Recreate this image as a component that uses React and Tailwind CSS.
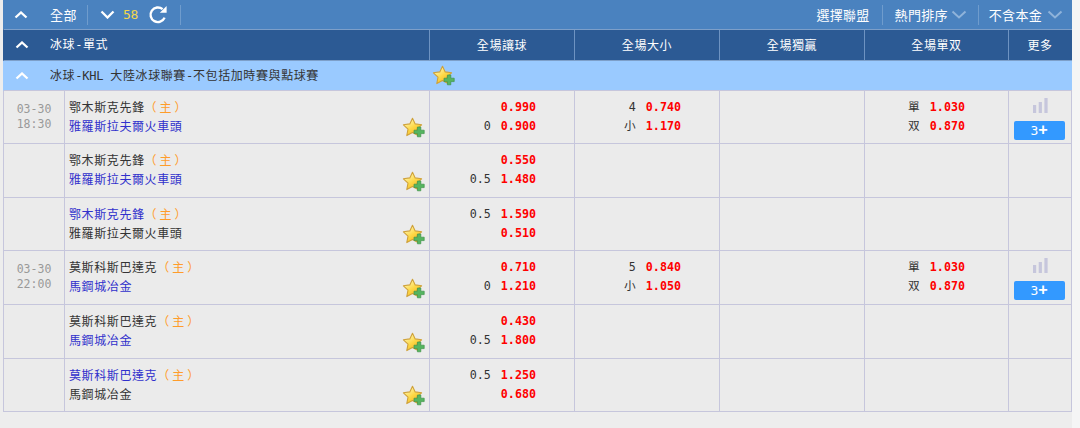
const headers = ['全場讓球', '全場大小', '全場獨贏', '全場單双', '更多']

const matches = [
  { date: '03-30', time: '18:30', home: '鄂木斯克先鋒', away: '雅羅斯拉夫爾火車頭', fav: 'away', hcp: [['', '0.990'], ['0', '0.900']], ou: [['4', '0.740'], ['小', '1.170']], oe: [['單', '1.030'], ['双', '0.870']], h: 'h-[53px]' },
  { home: '鄂木斯克先鋒', away: '雅羅斯拉夫爾火車頭', fav: 'away', hcp: [['', '0.550'], ['0.5', '1.480']], h: 'h-[54px]' },
  { home: '鄂木斯克先鋒', away: '雅羅斯拉夫爾火車頭', fav: 'home', hcp: [['0.5', '1.590'], ['', '0.510']], h: 'h-[53px]' },
  { date: '03-30', time: '22:00', home: '莫斯科斯巴達克', away: '馬鋼城冶金', fav: 'away', hcp: [['', '0.710'], ['0', '1.210']], ou: [['5', '0.840'], ['小', '1.050']], oe: [['單', '1.030'], ['双', '0.870']], h: 'h-[54px]' },
  { home: '莫斯科斯巴達克', away: '馬鋼城冶金', fav: 'away', hcp: [['', '0.430'], ['0.5', '1.800']], h: 'h-[54px]' },
  { home: '莫斯科斯巴達克', away: '馬鋼城冶金', fav: 'home', hcp: [['0.5', '1.250'], ['', '0.680']], h: 'h-[53px]' },
]

const gridCols = 'grid grid-cols-[61px_365px_145px_145px_145px_144px_62px]'
const mono = "font-['DejaVu_Sans_Mono','Noto_Sans_CJK_TC',monospace]"

function Chevron({ up, w = 14, h = 8, stroke = 2.3, className = '' }) {
  const points = up ? `1.5,${h - 1.5} ${w / 2},1.5 ${w - 1.5},${h - 1.5}` : `1.5,1.5 ${w / 2},${h - 1.5} ${w - 1.5},1.5`
  return (
    <svg width={w} height={h} viewBox={`0 0 ${w} ${h}`} className={`block shrink-0 ${className}`}>
      <polyline points={points} fill="none" stroke="currentColor" strokeWidth={stroke} />
    </svg>
  )
}

function Refresh() {
  return (
    <svg width="20" height="20" viewBox="0 0 20 20" className="block shrink-0">
      <path d="M16.6 12.6 A7.3 7.3 0 1 1 14.6 4.2" fill="none" stroke="white" strokeWidth="2.4" />
      <path d="M11.8 7.8 L18.6 7.8 L18.6 1 Z" fill="white" />
    </svg>
  )
}

function FavStar() {
  return (
    <svg width="23" height="21" viewBox="0 0 23 21" className="block">
      <defs>
        <linearGradient id="starFill" x1="0.15" y1="0.1" x2="0.8" y2="1">
          <stop offset="0" stopColor="#fff8b8" />
          <stop offset="0.5" stopColor="#fdd846" />
          <stop offset="1" stopColor="#f3ad1e" />
        </linearGradient>
      </defs>
      <path d="M10.5 1.2 L13.2 6.9 L19.6 7.8 L15 12.2 L16.2 18.6 L10.5 15.5 L4.8 18.6 L6 12.2 L1.4 7.8 L7.8 6.9 Z" fill="url(#starFill)" stroke="#cfa23a" strokeWidth="1.1" strokeLinejoin="round" />
      <path d="M15.4 10 h3.4 v3.2 h3.4 v3.4 h-3.4 v3.2 h-3.4 v-3.2 h-3.4 v-3.4 h3.4 Z" fill="#55b560" stroke="#3f9448" strokeWidth="0.7" />
    </svg>
  )
}

function OddsCell({ lines, pr = 'pr-[38px]' }) {
  return (
    <div className={`flex flex-col justify-center gap-[3px] border-r border-[#c6c6dc] pb-[2px] ${pr} ${mono} text-[11.7px]`}>
      {lines && lines.map(([label, odds], i) => (
        <div key={i} className="flex h-[16px] items-center justify-end leading-4">
          <span className="text-[#333]">{label}</span>
          <span className="ml-[10px] font-bold text-[#ff0000]">{odds}</span>
        </div>
      ))}
    </div>
  )
}

function Row({ m }) {
  return (
    <div className={`${gridCols} ${m.h} border-b border-[#c6c6dc] bg-[#ebebeb]`}>
      <div className="flex flex-col items-center justify-center border-r border-[#c6c6dc] pb-[1px] font-['DejaVu_Sans_Mono',monospace] text-[11.5px] leading-[15px] text-[#999]">
        <span>{m.date}</span>
        <span>{m.time}</span>
      </div>
      <div className="relative flex flex-col justify-center gap-[3px] border-r border-[#c6c6dc] pb-[2px] pl-[4px] text-xs tracking-[0.6px]">
        <div className="flex h-[16px] items-center leading-4">
          <span className={m.fav === 'home' ? 'text-[#3030cc]' : 'text-[#333]'}>{m.home}</span>
          <span className="tracking-[3px] text-[#ff9c2a]">（主）</span>
        </div>
        <div className={`h-[16px] leading-4 ${m.fav === 'away' ? 'text-[#3030cc]' : 'text-[#333]'}`}>{m.away}</div>
        <div className="absolute bottom-[5px] right-[4px]"><FavStar /></div>
      </div>
      <OddsCell lines={m.hcp} />
      <OddsCell lines={m.ou} />
      <OddsCell />
      <OddsCell lines={m.oe} pr="pr-[43px]" />
      <div className="flex flex-col items-center pt-[7px] pr-[2px]">
        {m.date && (
          <>
            <svg width="15" height="15" viewBox="0 0 15 15" className="ml-[2px] block">
              <rect x="0" y="7" width="3.2" height="8" fill="#c6c6dc" />
              <rect x="5.7" y="4" width="3.2" height="11" fill="#c6c6dc" />
              <rect x="11.4" y="0" width="3.2" height="15" fill="#c6c6dc" />
            </svg>
            <div className={`mt-[8px] flex h-[19px] w-[51px] items-center justify-center rounded-[2px] bg-[#3399ff] text-[13px] text-white ${mono}`}>
              3<span className="text-[15px] leading-none font-bold">+</span>
            </div>
          </>
        )}
      </div>
    </div>
  )
}

export default function App() {
  return (
    <div className="h-[428px] w-[1080px] overflow-hidden bg-[#f5f5f5] font-['Noto_Sans_CJK_TC','Noto_Sans',sans-serif]">
      <div className="h-full w-[1072px] bg-[#ededed] pl-[3px]">
        <div className="flex h-[29px] items-center bg-[#4a82bf] text-[13px] text-white">
          <div className="flex w-[47px] justify-center pr-[11px]"><Chevron up /></div>
          <span className="w-[37px] tracking-[0.6px]">全部</span>
          <div className="h-[20px] w-px bg-[#6f9ccd]" />
          <Chevron w={15} h={9} className="ml-[12px]" />
          <span className="ml-[8px] font-['DejaVu_Sans_Mono',monospace] text-[13px] tracking-[-0.4px] text-[#f2d64b]">58</span>
          <div className="ml-[10px]"><Refresh /></div>
          <div className="ml-[12px] h-[20px] w-px bg-[#6f9ccd]" />
          <div className="ml-auto flex items-center tracking-[0.3px]">
            <span className="mr-[12px]">選擇聯盟</span>
            <div className="h-[20px] w-px bg-[#6f9ccd]" />
            <span className="ml-[12px]">熱門排序</span>
            <Chevron w={16} h={9} stroke={2} className="ml-[3px] text-[#8fb3da]" />
            <div className="ml-[11px] h-[20px] w-px bg-[#6f9ccd]" />
            <span className="ml-[10px]">不含本金</span>
            <Chevron w={16} h={9} stroke={2} className="mr-[9px] ml-[5px] text-[#8fb3da]" />
          </div>
        </div>
        <div className={`${gridCols} h-[32px] border-y border-l border-[#7d9fc9] border-l-[#2c5a94] bg-[#2c5a94] text-xs tracking-[0.6px] text-white`}>
          <div className="col-span-2 flex items-center border-r border-[#6e93c2]">
            <div className="flex w-[46px] justify-center pr-[11px]"><Chevron up /></div>
            <span className={mono}>冰球-單式</span>
          </div>
          {headers.map((h, i) => (
            <div key={h} className={`flex items-center justify-center ${i < 4 ? 'border-r border-[#6e93c2]' : ''}`}>{h}</div>
          ))}
        </div>
        <div className={`${gridCols} h-[30px] border-b border-l border-[#c6c6dc] border-l-[#9acaff] bg-[#9acaff] text-xs`}>
          <div className="col-span-2 flex items-center">
            <div className="flex w-[46px] justify-center pr-[11px] text-white"><Chevron up /></div>
            <span className={`tracking-[0.6px] text-[#333] ${mono}`}>
              冰球<span className="tracking-[-0.2px]">-KHL </span>大陸冰球聯賽<span className="tracking-[-0.2px]">-</span>不包括加時賽與點球賽
            </span>
          </div>
          <div className="col-span-5 flex items-center pl-[2px]"><FavStar /></div>
        </div>
        <div className="border-x border-[#c6c6dc]">
          {matches.map((m, i) => <Row key={i} m={m} />)}
        </div>
      </div>
    </div>
  )
}
